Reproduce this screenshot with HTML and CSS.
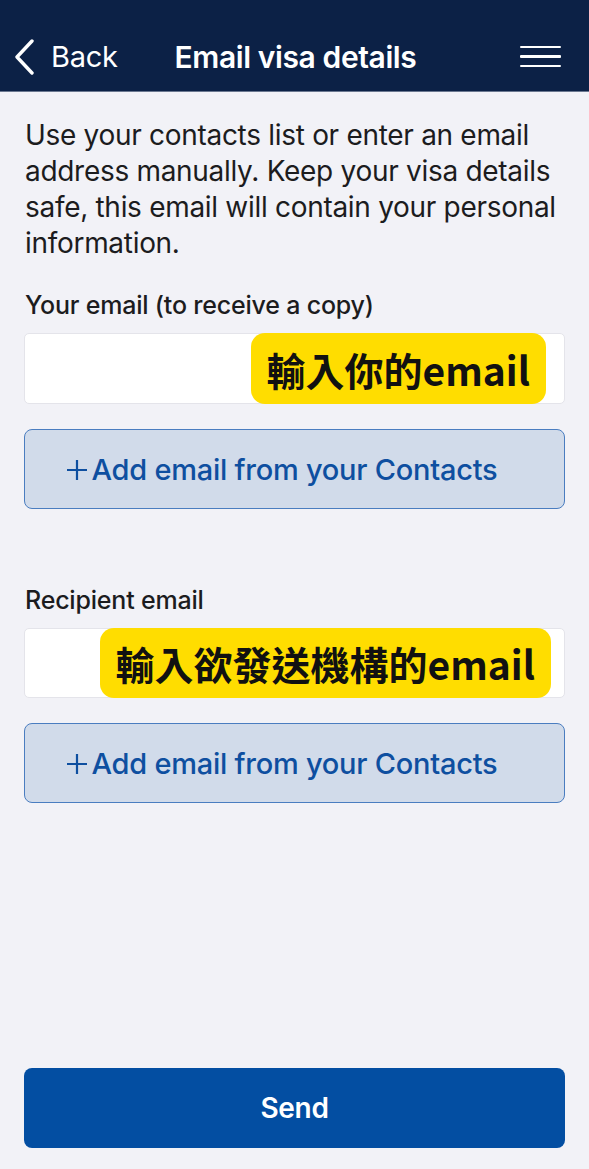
FILE: index.html
```html
<!DOCTYPE html>
<html lang="en">
<head>
<meta charset="utf-8">
<title>Email visa details</title>
<link rel="stylesheet" href="styles.css">
</head>
<body>
<div class="page">
  <header class="topbar">
    <div class="back">
      <svg class="chevron" width="22" height="36" viewBox="0 0 22 36"><path d="M18 2 L3 18 L18 34" fill="none" stroke="#fff" stroke-width="3.4" stroke-linecap="round" stroke-linejoin="round"/></svg>
      <span class="back-label">Back</span>
    </div>
    <h1 class="title">Email visa details</h1>
    <div class="menu">
      <span class="menu-line"></span>
      <span class="menu-line"></span>
      <span class="menu-line"></span>
    </div>
  </header>
  <main class="content">
    <p class="intro">Use your contacts list or enter an email address manually. Keep your visa details safe, this email will contain your personal information.</p>
    <section class="field">
      <div class="label">Your email (to receive a copy)</div>
      <div class="input input-first"><span class="badge">輸入你的email</span></div>
      <button class="contacts-btn"><svg class="plus" width="22" height="22" viewBox="0 0 22 22"><path d="M11 1 V21 M1 11 H21" stroke="currentColor" stroke-width="2.2" fill="none"/></svg>Add email from your Contacts</button>
    </section>
    <section class="field field-second">
      <div class="label">Recipient email</div>
      <div class="input input-second"><span class="badge">輸入欲發送機構的email</span></div>
      <button class="contacts-btn"><svg class="plus" width="22" height="22" viewBox="0 0 22 22"><path d="M11 1 V21 M1 11 H21" stroke="currentColor" stroke-width="2.2" fill="none"/></svg>Add email from your Contacts</button>
    </section>
  </main>
  <footer class="footer">
    <button class="send-btn">Send</button>
  </footer>
</div>
</body>
</html>
```
FILE: styles.css
```css
html, body {
  margin: 0;
  padding: 0;
  background: #f2f2f7;
}
body {
  font-family: Inter, "Noto Sans", "Liberation Sans", sans-serif;
  color: #1c1c1e;
}
.page {
  min-height: 1169px;
  display: flex;
  flex-direction: column;
}
.topbar {
  height: 92px;
  background: #0c2146;
  border-bottom: 1px solid #6b7890;
  box-sizing: border-box;
  display: grid;
  grid-template-columns: 1fr auto 1fr;
  align-items: center;
  padding: 22px 28px 0 14px;
  color: #fff;
}
.back {
  display: flex;
  align-items: center;
  gap: 15px;
}
.chevron {
  display: block;
}
.back-label {
  font-size: 29px;
  font-weight: 400;
  letter-spacing: -0.3px;
}
.title {
  margin: 0;
  font-size: 30px;
  font-weight: 600;
  text-align: center;
  letter-spacing: -0.4px;
  position: relative;
  left: 8px;
}
.menu {
  justify-self: end;
  display: flex;
  flex-direction: column;
  gap: 7px;
  width: 41px;
}
.menu-line {
  display: block;
  height: 2.4px;
  background: #fff;
  border-radius: 1px;
}
.content {
  flex: 1;
  padding: 0 24px;
}
.intro {
  margin: 25px 0 0 1px;
  font-size: 28px;
  line-height: 36px;
  letter-spacing: -0.3px;
}
.field {
  margin-top: 29px;
}
.field-second {
  margin-top: 76px;
}
.label {
  font-size: 25px;
  font-weight: 500;
  line-height: 30px;
  margin-left: 1px;
  letter-spacing: -0.2px;
}
.input {
  margin-top: 13px;
  height: 71px;
  box-sizing: border-box;
  background: #fff;
  border: 1px solid #e4e4ea;
  border-radius: 5px;
  display: flex;
  justify-content: flex-end;
  align-items: stretch;
}
.input-first {
  padding-right: 18px;
}
.input-second {
  height: 70px;
  padding-right: 13px;
}
.badge {
  display: flex;
  align-items: center;
  background: #ffdd00;
  border-radius: 14px;
  padding: 0 16px;
  font-family: "Noto Sans CJK TC", "Noto Sans", sans-serif;
  font-size: 39px;
  font-weight: 700;
  color: #111;
  margin: -1px 0;
}
.contacts-btn {
  display: flex;
  align-items: center;
  justify-content: center;
  width: 100%;
  margin-top: 25px;
  height: 80px;
  box-sizing: border-box;
  background: #d1dbea;
  border: 1.8px solid #4a7dc0;
  border-radius: 8px;
  color: #0e4fa0;
  font-family: Inter, "Noto Sans", "Liberation Sans", sans-serif;
  font-size: 29px;
  font-weight: 500;
  letter-spacing: -0.25px;
  padding: 0 26px 0 0;
}
.plus {
  display: block;
  flex: none;
  margin-right: 4px;
  position: relative;
  top: 1px;
}
.footer {
  padding: 0 24px 21px;
}
.send-btn {
  display: block;
  width: 100%;
  height: 80px;
  background: #034ea2;
  border: none;
  border-radius: 8px;
  color: #fff;
  font-family: Inter, "Noto Sans", "Liberation Sans", sans-serif;
  font-size: 28px;
  font-weight: 600;
  letter-spacing: -0.3px;
}
```
